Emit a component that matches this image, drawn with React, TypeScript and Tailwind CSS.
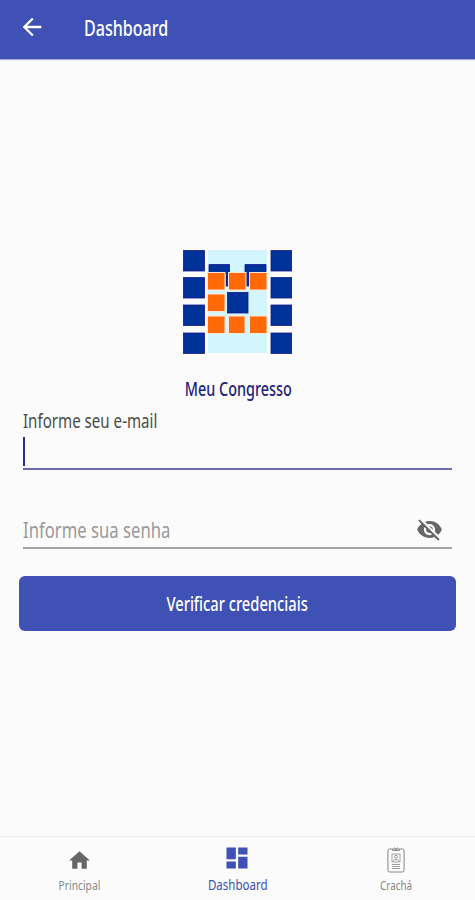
import React from 'react';
import { MdArrowBack, MdDashboard, MdHome, MdVisibilityOff } from 'react-icons/md';

const Logo: React.FC = () => (
  <svg width="110" height="106" viewBox="0 0 110 106" className="block">
    <rect x="25" y="0" width="59" height="103" fill="#d3f5fd" />
    <g fill="#00339a" stroke="#15158c" strokeWidth="0.8">
      {[0.6, 27.6, 55, 83].map((y) => (
        <React.Fragment key={y}>
          <rect x="0.5" y={y} width="21" height="20.4" />
          <rect x="88" y={y} width="20.6" height="20.4" />
        </React.Fragment>
      ))}
      <path d="M26 14.5H46.5V36H43V23H26Z" />
      <path d="M62 14.5H83V23H66V36H63V23H62Z" />
    </g>
    <g fill="#ff6908" stroke="#ffe6d6" strokeWidth="1">
      <rect x="24.5" y="22.5" width="17.5" height="17.5" />
      <rect x="45.5" y="22.5" width="17.5" height="17.5" />
      <rect x="66.5" y="22.5" width="17.5" height="17.5" />
      <rect x="24.5" y="44" width="17.5" height="17.5" />
      <rect x="24.5" y="66" width="17.5" height="17.5" />
      <rect x="45.5" y="66" width="16.5" height="17.5" />
      <rect x="66.5" y="66" width="17.5" height="17.5" />
    </g>
    <rect x="44.5" y="42.5" width="20.5" height="20.5" fill="#00339a" stroke="#15158c" strokeWidth="0.8" />
  </svg>
);

const BadgeIcon: React.FC = () => (
  <svg width="18" height="26" viewBox="0 0 18 26" fill="none" stroke="#858585" className="block">
    <rect x="0.9" y="2" width="16.2" height="23" rx="1.8" strokeWidth="1" />
    <path d="M5.5 2V3.5H12.5V2M7.5 0.5L9 3L10.5 0.5" strokeWidth="0.9" />
    <rect x="5" y="7" width="8" height="8" strokeWidth="0.7" />
    <circle cx="9" cy="9.7" r="1.5" strokeWidth="0.8" />
    <path d="M6 14.5C6.5 12 11.5 12 12 14.5" strokeWidth="0.8" />
    <path d="M5 17.5H13M5 19.5H13M5 21.5H13" strokeWidth="0.8" />
  </svg>
);

const App: React.FC = () => {
  return (
    <div className="flex h-[900px] w-full flex-col overflow-hidden bg-[#fbfbfb] font-['Noto_Sans',sans-serif] whitespace-nowrap">
      {/* App bar */}
      <header className="flex h-[59px] shrink-0 items-start bg-[#3f51b5] pl-[18px] text-white shadow-[0_1px_1px_#a9b0d8]">
        <MdArrowBack size={28} className="mt-[13px]" />
        <h1 className="mt-[12px] ml-[38px] origin-left scale-x-[0.73] text-[22px] leading-[30px] font-medium">Dashboard</h1>
      </header>

      {/* Login form */}
      <main className="flex flex-1 flex-col">
        <div className="mt-[191px] flex flex-col items-center pl-px">
          <Logo />
          <p className="mt-[20px] origin-center scale-x-[0.72] text-[20px] leading-[26px] font-medium text-[#24247c]">
            Meu Congresso
          </p>
        </div>

        <div className="mx-[23px] mt-[6px] flex h-[62px] flex-col border-b-2 border-[#6c6ca8]">
          <label className="origin-left self-start scale-x-[0.795] text-[19px] leading-[26px] text-[#4c4c4c]">
            Informe seu e-mail
          </label>
          <span className="mt-[3px] h-[29px] w-[2px] bg-[#20308f]" />
        </div>

        <div className="mx-[23px] mt-[43px] flex h-[36px] items-start justify-between border-b-2 border-[#a4a4a4] pr-[9px]">
          <span className="mt-px origin-left scale-x-[0.758] text-[22px] leading-[30px] text-[#999999]">
            Informe sua senha
          </span>
          <MdVisibilityOff size={27} className="mt-[3px] text-[#666666]" />
        </div>

        <button className="mx-[19px] mt-[27px] flex h-[55px] items-center justify-center rounded-[6px] bg-[#3f51b5] text-white">
          <span className="scale-x-[0.735] text-[20px] leading-[26px] font-medium">Verificar credenciais</span>
        </button>
      </main>

      {/* Bottom navigation */}
      <nav className="grid h-[64px] shrink-0 grid-cols-3 border-t border-[#eeeeee] bg-[#fbfbfb] text-[#888888]">
        <div className="flex flex-col items-center">
          <MdHome size={25} className="mt-[11px] text-[#666666]" />
          <span className="mt-[3px] scale-x-[0.79] text-[13px] leading-[18px]">Principal</span>
        </div>
        <div className="flex flex-col items-center text-[#3f51b5]">
          <MdDashboard size={28} className="mt-[7px]" />
          <span className="mt-[3px] scale-x-[0.77] text-[15px] leading-[18px]">Dashboard</span>
        </div>
        <div className="flex flex-col items-center">
          <div className="mt-[10px]">
            <BadgeIcon />
          </div>
          <span className="mt-[3px] scale-x-[0.76] text-[13px] leading-[18px]">Crachá</span>
        </div>
      </nav>
    </div>
  );
};

export default App;
